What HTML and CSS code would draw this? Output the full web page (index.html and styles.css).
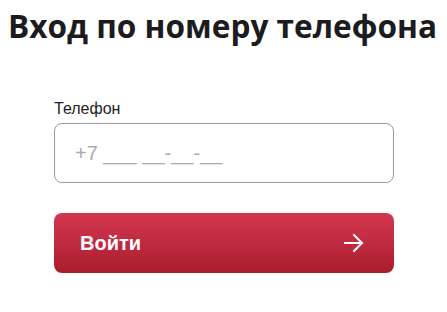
FILE: index.html
```html
<!DOCTYPE html>
<html lang="ru">
<head>
<meta charset="utf-8">
<title>Вход по номеру телефона</title>
<link rel="stylesheet" href="styles.css">
</head>
<body>
<main class="page">
  <h1 class="title">Вход по номеру телефона</h1>
  <form class="form">
    <label class="label" for="phone">Телефон</label>
    <input class="field" id="phone" type="tel" placeholder="+7 ___ __-__-__">
    <button class="submit" type="button">
      <span class="submit-text">Войти</span>
      <svg class="submit-icon" width="20" height="20" viewBox="0 0 20 20" fill="none" stroke="#fff" stroke-width="2" stroke-linecap="square">
        <path d="M1 10H18"/>
        <path d="M10 2L18 10L10 18"/>
      </svg>
    </button>
  </form>
</main>
</body>
</html>
```

FILE: styles.css
```css
html, body {
  margin: 0;
  padding: 0;
  background: #fff;
}
.page {
  padding: 8px 0 0 8px;
  font-family: "Open Sans", "Liberation Sans", sans-serif;
}
.title {
  margin: 0;
  font-family: "Open Sans", Roboto, sans-serif;
  font-size: 31.6px;
  line-height: 36px;
  font-weight: 700;
  color: #1c1c1e;
  white-space: nowrap;
}
.form {
  display: flex;
  flex-direction: column;
  width: 340px;
  margin: 55px 0 0 46px;
}
.label {
  font-family: "Liberation Sans", Arial, sans-serif;
  font-size: 16px;
  line-height: 19px;
  color: #222;
  margin-bottom: 5px;
}
.field {
  box-sizing: border-box;
  height: 60px;
  width: 100%;
  border: 1px solid #9a9aa2;
  border-radius: 8px;
  padding: 0 20px;
  font-family: "Liberation Sans", Arial, sans-serif;
  font-size: 20px;
  color: #222;
  outline: none;
}
.field::placeholder {
  color: #aaaaaa;
}
.submit {
  box-sizing: border-box;
  margin-top: 30px;
  height: 60px;
  width: 100%;
  border: 0;
  border-radius: 8px;
  background: linear-gradient(180deg, #d2384f 0%, #c02a40 50%, #a91d2c 100%);
  display: flex;
  align-items: center;
  justify-content: space-between;
  padding: 0 30px 0 26px;
  cursor: pointer;
}
.submit-text {
  font-family: "Liberation Sans", Arial, sans-serif;
  font-weight: 700;
  font-size: 20px;
  color: #fff;
}
.submit-icon {
  display: block;
}
```
